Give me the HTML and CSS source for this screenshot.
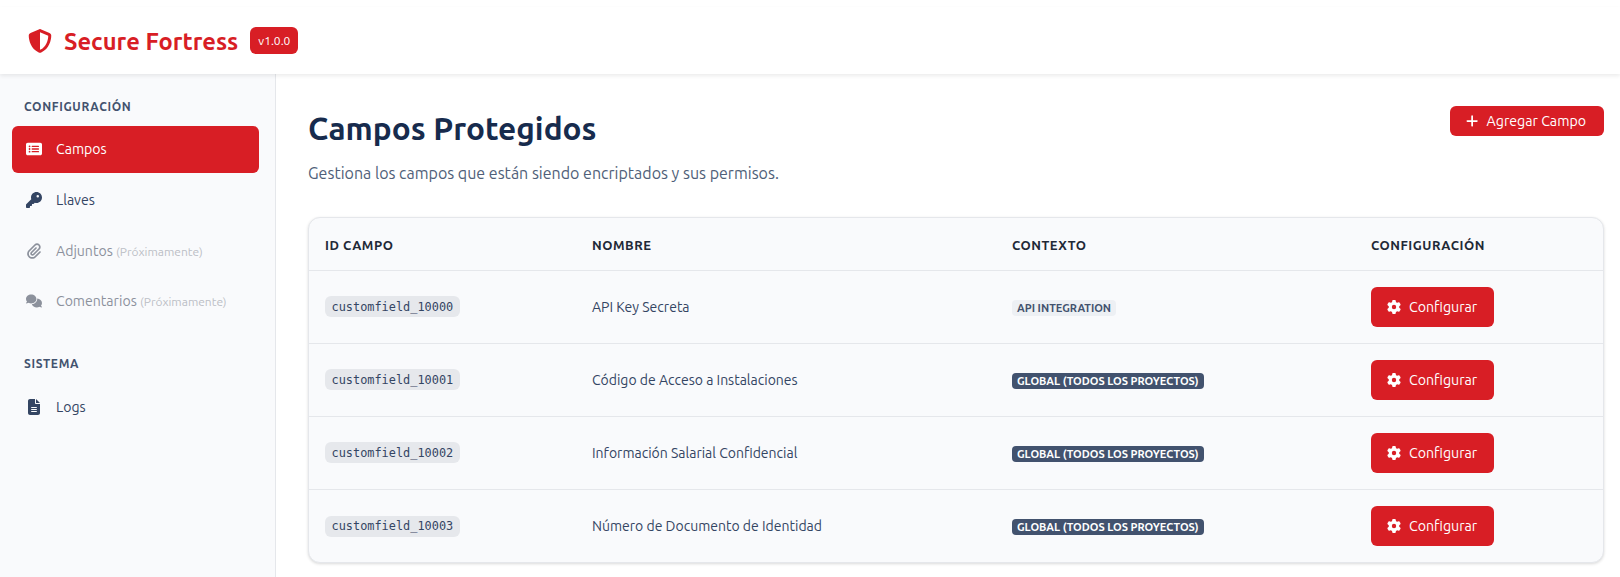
FILE: index.html
```html
<!DOCTYPE html>
<html lang="es">
<head>
<meta charset="utf-8">
<title>Secure Fortress</title>
<link rel="stylesheet" href="styles.css">
</head>
<body>
<header class="topbar">
  <svg class="logo" viewBox="0 0 512 512"><path d="M256 0c4.6 0 9.2 1 13.4 2.9L457.7 82.8c22 9.3 38.4 31 38.3 57.2c-.5 99.2-41.3 280.7-213.6 363.2c-16.7 8-36.1 8-52.8 0C57.3 420.7 16.5 239.2 16 140c-.1-26.2 16.3-47.9 38.3-57.2L242.7 2.9C246.8 1 251.4 0 256 0zm0 66.8V444.8C394 378 431.1 230.1 432 141.4L256 66.8l0 0z"/></svg>
  <span class="brand">Secure Fortress</span>
  <span class="version">v1.0.0</span>
</header>
<div class="layout">
  <aside class="sidebar">
    <div class="side-title">CONFIGURACIÓN</div>
    <a class="nav active"><svg class="ico" viewBox="0 0 576 512"><path d="M0 96C0 60.7 28.7 32 64 32H512c35.3 0 64 28.7 64 64V416c0 35.3-28.7 64-64 64H64c-35.3 0-64-28.7-64-64V96zM128 288a32 32 0 1 0 0-64 32 32 0 1 0 0 64zm32-128a32 32 0 1 0 -64 0 32 32 0 1 0 64 0zM128 384a32 32 0 1 0 0-64 32 32 0 1 0 0 64zm96-248c-13.3 0-24 10.7-24 24s10.7 24 24 24H448c13.3 0 24-10.7 24-24s-10.7-24-24-24H224zm0 96c-13.3 0-24 10.7-24 24s10.7 24 24 24H448c13.3 0 24-10.7 24-24s-10.7-24-24-24H224zm0 96c-13.3 0-24 10.7-24 24s10.7 24 24 24H448c13.3 0 24-10.7 24-24s-10.7-24-24-24H224z"/></svg><span>Campos</span></a>
    <a class="nav"><svg class="ico" viewBox="0 0 512 512"><path d="M336 352c97.2 0 176-78.8 176-176S433.2 0 336 0S160 78.8 160 176c0 18.7 2.9 36.8 8.3 53.7L7 391c-4.5 4.5-7 10.6-7 17v80c0 13.3 10.7 24 24 24h80c13.3 0 24-10.7 24-24V448h40c13.3 0 24-10.7 24-24V384h40c6.4 0 12.5-2.5 17-7l33.3-33.3c16.9 5.4 35 8.3 53.7 8.3zM376 96a40 40 0 1 1 0 80 40 40 0 1 1 0-80z"/></svg><span>Llaves</span></a>
    <a class="nav off"><svg class="ico" viewBox="0 0 448 512"><path d="M364.2 83.8c-24.4-24.4-64-24.4-88.4 0l-184 184c-42.1 42.1-42.1 110.3 0 152.4s110.3 42.1 152.4 0l152-152c10.9-10.9 28.7-10.9 39.6 0s10.9 28.7 0 39.6l-152 152c-64 64-167.6 64-231.6 0s-64-167.6 0-231.6l184-184c46.3-46.3 121.3-46.3 167.6 0s46.3 121.3 0 167.6l-176 176c-28.6 28.6-75 28.6-103.6 0s-28.6-75 0-103.6l144-144c10.9-10.9 28.7-10.9 39.6 0s10.9 28.7 0 39.6l-144 144c-6.7 6.7-6.7 17.7 0 24.4s17.7 6.7 24.4 0l176-176c24.4-24.4 24.4-64 0-88.4z"/></svg><span>Adjuntos <small>(Próximamente)</small></span></a>
    <a class="nav off"><svg class="ico" viewBox="0 0 640 512"><path d="M208 352c114.9 0 208-78.8 208-176S322.9 0 208 0S0 78.8 0 176c0 38.6 14.7 74.3 39.6 103.4c-3.5 9.4-8.7 17.7-14.2 24.7c-4.8 6.2-9.7 11-13.3 14.3c-1.8 1.6-3.3 2.9-4.3 3.7c-.5 .4-.9 .7-1.1 .8l-.2 .2 0 0 0 0C1 327.2-1.4 334.4 .8 340.9S9.1 352 16 352c21.8 0 43.8-5.6 62.1-12.5c9.2-3.5 17.8-7.4 25.3-11.4C134.1 343.3 169.8 352 208 352zM448 176c0 112.3-99.1 196.9-216.5 207C255.8 457.4 336.4 512 432 512c38.2 0 73.9-8.7 104.7-23.9c7.5 4 16 7.9 25.2 11.4c18.3 6.9 40.3 12.5 62.1 12.5c6.9 0 13.1-4.5 15.2-11.1c2.1-6.6-.2-13.8-5.8-17.9l0 0 0 0-.2-.2c-.2-.2-.6-.4-1.1-.8c-1-.8-2.5-2-4.3-3.7c-3.6-3.3-8.5-8.1-13.3-14.3c-5.5-7-10.7-15.4-14.2-24.7c24.9-29 39.6-64.7 39.6-103.4c0-92.8-84.9-168.9-192.6-175.5c.4 5.1 .6 10.3 .6 15.5z"/></svg><span>Comentarios <small>(Próximamente)</small></span></a>
    <div class="side-title second">SISTEMA</div>
    <a class="nav"><svg class="ico" viewBox="0 0 384 512"><path d="M64 0C28.7 0 0 28.7 0 64V448c0 35.3 28.7 64 64 64H320c35.3 0 64-28.7 64-64V160H256c-17.7 0-32-14.3-32-32V0H64zM256 0V128H384L256 0zM112 256H272c8.8 0 16 7.2 16 16s-7.2 16-16 16H112c-8.8 0-16-7.2-16-16s7.2-16 16-16zm0 64H272c8.8 0 16 7.2 16 16s-7.2 16-16 16H112c-8.8 0-16-7.2-16-16s7.2-16 16-16zm0 64H272c8.8 0 16 7.2 16 16s-7.2 16-16 16H112c-8.8 0-16-7.2-16-16s7.2-16 16-16z"/></svg><span>Logs</span></a>
  </aside>
  <main class="main">
    <div class="page-head">
      <div>
        <h1>Campos Protegidos</h1>
        <p>Gestiona los campos que están siendo encriptados y sus permisos.</p>
      </div>
      <button class="btn add"><svg class="btn-ico plus" viewBox="0 0 448 512"><path d="M256 80c0-17.7-14.3-32-32-32s-32 14.3-32 32V224H48c-17.7 0-32 14.3-32 32s14.3 32 32 32H192V432c0 17.7 14.3 32 32 32s32-14.3 32-32V288H400c17.7 0 32-14.3 32-32s-14.3-32-32-32H256V80z"/></svg>Agregar Campo</button>
    </div>
    <div class="card">
      <table>
        <colgroup><col class="c1"><col class="c2"><col class="c3"><col class="c4"></colgroup>
        <thead><tr><th>ID CAMPO</th><th>NOMBRE</th><th>CONTEXTO</th><th>CONFIGURACIÓN</th></tr></thead>
        <tbody>
          <tr><td><code>customfield_10000</code></td><td>API Key Secreta</td><td><span class="tag light">API INTEGRATION</span></td><td><button class="btn cfg"><svg class="btn-ico gear" viewBox="0 0 512 512"><use href="#gear"/></svg>Configurar</button></td></tr>
          <tr><td><code>customfield_10001</code></td><td>Código de Acceso a Instalaciones</td><td><span class="tag dark">GLOBAL (TODOS LOS PROYECTOS)</span></td><td><button class="btn cfg"><svg class="btn-ico gear" viewBox="0 0 512 512"><use href="#gear"/></svg>Configurar</button></td></tr>
          <tr><td><code>customfield_10002</code></td><td>Información Salarial Confidencial</td><td><span class="tag dark">GLOBAL (TODOS LOS PROYECTOS)</span></td><td><button class="btn cfg"><svg class="btn-ico gear" viewBox="0 0 512 512"><use href="#gear"/></svg>Configurar</button></td></tr>
          <tr><td><code>customfield_10003</code></td><td>Número de Documento de Identidad</td><td><span class="tag dark">GLOBAL (TODOS LOS PROYECTOS)</span></td><td><button class="btn cfg"><svg class="btn-ico gear" viewBox="0 0 512 512"><use href="#gear"/></svg>Configurar</button></td></tr>
        </tbody>
      </table>
    </div>
  </main>
</div>
<svg class="defs" aria-hidden="true"><defs><path id="gear" d="M495.9 166.6c3.2 8.7 .5 18.4-6.4 24.6l-43.3 39.4c1.1 8.3 1.7 16.8 1.7 25.4s-.6 17.1-1.7 25.4l43.3 39.4c6.9 6.2 9.6 15.9 6.4 24.6c-4.4 11.9-9.7 23.3-15.8 34.3l-4.7 8.1c-6.6 11-14 21.4-22.1 31.2c-5.9 7.2-15.7 9.6-24.5 6.8l-55.7-17.7c-13.4 10.3-28.2 18.9-44 25.4l-12.5 57.1c-2 9.1-9 16.3-18.2 17.8c-13.8 2.3-28 3.5-42.5 3.5s-28.7-1.2-42.5-3.5c-9.2-1.5-16.2-8.7-18.2-17.8l-12.5-57.1c-15.8-6.5-30.6-15.1-44-25.4L83.1 425.9c-8.8 2.8-18.6 .3-24.5-6.8c-8.1-9.8-15.5-20.2-22.1-31.2l-4.7-8.1c-6.1-11-11.4-22.4-15.8-34.3c-3.2-8.7-.5-18.4 6.4-24.6l43.3-39.4C64.6 273.1 64 264.6 64 256s.6-17.1 1.7-25.4L22.4 191.2c-6.9-6.2-9.6-15.9-6.4-24.6c4.4-11.9 9.7-23.3 15.8-34.3l4.7-8.1c6.6-11 14-21.4 22.1-31.2c5.9-7.2 15.7-9.6 24.5-6.8l55.7 17.7c13.4-10.3 28.2-18.9 44-25.4l12.5-57.1c2-9.1 9-16.3 18.2-17.8C227.3 1.2 241.5 0 256 0s28.7 1.2 42.5 3.5c9.2 1.5 16.2 8.7 18.2 17.8l12.5 57.1c15.8 6.5 30.6 15.1 44 25.4l55.7-17.7c8.8-2.8 18.6-.3 24.5 6.8c8.1 9.8 15.5 20.2 22.1 31.2l4.7 8.1c6.1 11 11.4 22.4 15.8 34.3zM256 336a80 80 0 1 0 0-160 80 80 0 1 0 0 160z"/></defs></svg>
</body>
</html>
```
FILE: styles.css
```css
* { box-sizing: border-box; }
html, body { margin: 0; height: 577px; overflow: hidden; background: #fff; }
body { font-family: Ubuntu, "Noto Sans", sans-serif; color: #172b4d; }
.defs { position: absolute; width: 0; height: 0; }
.topbar { height: 67px; margin-top: 7px; display: flex; align-items: center; padding-left: 28px; background: #fff; box-shadow: 0 2px 4px rgba(0,0,0,.08); position: relative; z-index: 1; }
.logo { width: 24px; height: 24px; fill: #d81e25; margin-right: 12px; }
.brand { font-size: 23.7px; font-weight: 700; color: #d81e25; }
.version { margin-left: 12px; background: #d81e25; color: #fff; font-size: 12px; padding: 0 8px; height: 27px; line-height: 27px; border-radius: 6px; }
.layout { display: flex; height: 503px; }
.sidebar { width: 276px; flex: none; background: #f9fafc; border-right: 1px solid #e5e7eb; padding: 25.4px 16px 0 12px; }
.side-title { font-size: 12px; font-weight: 700; letter-spacing: .65px; color: #42526e; padding-left: 12px; height: 16px; line-height: 16px; margin-bottom: 10.8px; }
.side-title.second { margin-top: 31.8px; margin-bottom: 11.6px; }
.nav { display: flex; align-items: center; height: 46.6px; margin-bottom: 4px; padding-left: 14px; border-radius: 6px; font-size: 14.1px; color: #344563; }
.nav.active { background: #d81e25; color: #fff; }
.nav.off { color: #8c919c; }
.nav small { font-size: 12px; color: #bcbfc6; }
.ico { width: 16px; height: 16px; flex: none; fill: currentColor; margin-right: 14px; }
.main { flex: 1; padding: 32px 16px 0 32px; }
.page-head { display: flex; justify-content: space-between; align-items: flex-start; margin-bottom: 35px; }
h1 { margin: 1px 0 0; font-size: 31.6px; font-weight: 700; color: #172b4d; line-height: 44px; }
.page-head p { margin: 13px 0 0; font-size: 16px; color: #505f79; }
.btn { display: inline-flex; align-items: center; border: 0; background: #d81e25; color: #fff; font-family: inherit; font-size: 14.2px; border-radius: 6px; }
.add { height: 30px; padding: 0 18px 0 16px; }
.cfg { height: 40px; padding: 0 17px 0 16px; }
.btn-ico { width: 14px; height: 14px; fill: currentColor; margin-right: 8px; }
.plus { width: 12.25px; }
.card { border: 1px solid #e5e7eb; border-radius: 12px; background: #f9fafc; box-shadow: 0 1px 3px rgba(0,0,0,.15); overflow: hidden; }
table { width: 100%; border-collapse: collapse; table-layout: fixed; }
.c1 { width: 267px; } .c2 { width: 420px; } .c3 { width: 359px; }
th { height: 52px; padding: 2px 16px 0; text-align: left; font-size: 13px; font-weight: 700; letter-spacing: .52px; color: #1f2937; }
td { height: 73px; padding: 0 16px; font-size: 14px; color: #344563; border-top: 1px solid #e5e7eb; }
code { display: inline-block; vertical-align: -2px; font-family: "DejaVu Sans Mono", monospace; font-size: 11.9px; color: #344563; background: #e6e8ec; padding: 3.5px 6.5px; border-radius: 6px; }
.tag { display: inline-block; vertical-align: -2px; font-size: 11px; font-weight: 700; padding: 2px 5px; border-radius: 4px; }
.light { background: #edf0f4; color: #42526e; }
.dark { background: #42526e; color: #fff; }
```
